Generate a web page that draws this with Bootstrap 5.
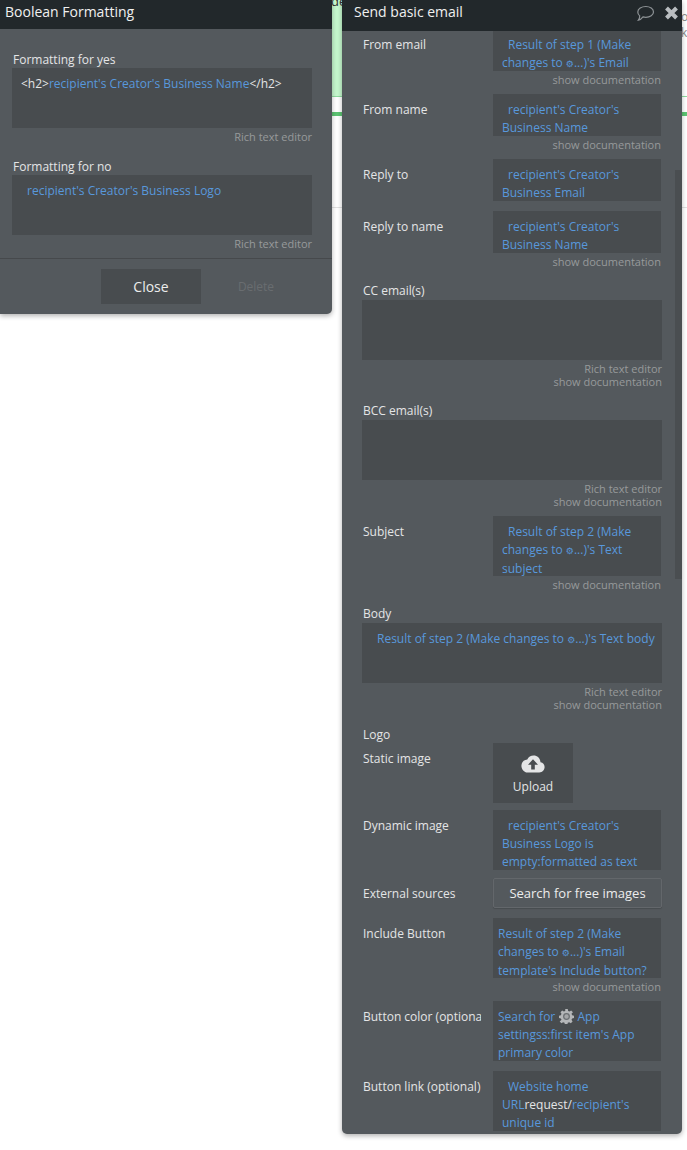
<!DOCTYPE html>
<html lang="en">
<head>
    <meta charset="UTF-8">
    <meta name="viewport" content="width=device-width, initial-scale=1.0">
    <title>Send basic email</title>
    <link href="https://cdn.jsdelivr.net/npm/bootstrap@5.3.3/dist/css/bootstrap.min.css" rel="stylesheet">
    <style>
        body {
            background-color: #fff;
            font-family: "Open Sans", sans-serif;
            font-size: 12px;
            line-height: 18px;
            color: #e4e5e6;
            overflow: hidden;
        }
        /* what shows behind the two palettes */
        .bg-strip { position: absolute; left: 332px; top: 0; width: 355px; height: 208px; overflow: hidden; }
        .bg-green { position: absolute; left: 0; top: 0; width: 10px; height: 96px; background-color: #c5f8cd; }
        .bg-word { position: absolute; left: -1px; top: -8px; font-size: 13px; color: #333; }
        .bg-thin { position: absolute; left: 0; right: 0; top: 96px; height: 1px; background-color: #8fdc9f; }
        .bg-thick { position: absolute; left: 0; right: 0; top: 112px; height: 4px; background-color: #5cc472; }
        .bg-edge { position: absolute; left: 0; right: 0; top: 207px; height: 1px; background-color: #e2e2e2; }
        .bg-side { position: absolute; left: 349px; font-size: 12px; color: #888; }

        .palette {
            position: absolute;
            top: 0;
            background-color: #54595d;
            box-shadow: 0 2px 5px rgba(0, 0, 0, .3);
            border-radius: 0 0 5px 5px;
        }
        .pal-left { left: 0; width: 332px; height: 314px; border-radius: 0 0 5px 0; }
        .pal-right { left: 342px; width: 340px; height: 1134px; }
        .pal-head {
            background-color: #22282b;
            color: #f0f0f0;
            font-size: 14px;
            height: 29px;
            line-height: 24px;
            padding-left: 5px;
        }
        .pal-right .pal-head { height: 31px; padding-left: 12px; }
        .pal-body { padding: 0 20px; position: relative; }
        .pal-left .pal-body { padding: 21px 20px 0 12px; }

        .lbl { padding: 1px 0 0 1px; margin-bottom: -1px; }
        .lbl-side { width: 131px; flex: none; padding: 7px 0 0 1px; white-space: nowrap; overflow: hidden; }
        .lbl-cut { width: 119px; margin-right: 12px; }
        .fld {
            background-color: #484c4f;
            color: #e4e5e6;
            padding: 7px 5px 0 9px;
            height: 60px;
            overflow: hidden;
        }
        .fld-side { width: 168px; }
        .fld-flat { padding-left: 5px; }
        .fld-two { height: 42px; }
        .fld-top { height: 40px; padding-top: 5px; }
        .fld-wide { padding-left: 15px; padding-right: 0; }
        .dyn { color: #5898dc; }
        .ind { display: inline-block; width: 6px; }
        .tiny-gear { font-family: "DejaVu Sans", sans-serif; font-size: 9px; }
        .doc { color: #97999b; font-size: 11px; text-align: right; padding-right: 1px; }
        .doc-rich { color: #97999b; font-size: 11px; line-height: 13px; text-align: right; padding-top: 2px; }
        .doc-rich span { display: block; }

        .sp5 { margin-top: 5px; }
        .sp7 { margin-top: 7px; }
        .sp8 { margin-top: 8px; }
        .sp10 { margin-top: 10px; }
        .sp13 { margin-top: 13px; }
        .sp14 { margin-top: 14px; }
        .sp1 { margin-top: 1px; }

        .upload-box {
            width: 80px;
            height: 60px;
            background-color: #484c4f;
            text-align: center;
            padding-top: 12px;
        }
        .upload-box svg { display: block; margin: 0 auto 5px; }
        .free-btn {
            width: 169px;
            height: 30px;
            background-color: #54595d;
            border: 1px solid #63676b;
            border-radius: 2px;
            color: #ececec;
            font-size: 13px;
            padding: 0;
            box-shadow: 0 1px 1px rgba(0, 0, 0, .15);
        }
        .rule { border-top: 1px solid #46494c; margin: 8px -20px 0 -12px; }
        .foot-row { padding-top: 10px; }
        .close-btn {
            width: 100px;
            height: 35px;
            background-color: #484c4f;
            color: #ececec;
            border: 0;
            border-radius: 0;
            font-size: 14px;
            padding: 0;
            margin-left: 89px;
        }
        .delete-btn {
            width: 100px;
            margin-left: 5px;
            color: #696d70;
            font-size: 12px;
            line-height: 35px;
            text-align: center;
        }
        .scroll-thumb {
            position: absolute;
            left: 333px;
            top: 139px;
            width: 7px;
            height: 409px;
            background-color: #4a4e51;
        }
        .head-icons { position: absolute; top: 5px; left: 294px; display: flex; gap: 9px; }
        .gear-inline { vertical-align: -3px; margin-left: 1px; }
    </style>
</head>
<body>
    <div class="bg-strip">
        <div class="bg-green"></div>
        <div class="bg-word">de</div>
        <div class="bg-thin"></div>
        <div class="bg-thick"></div>
        <div class="bg-edge"></div>
        <div class="bg-side" style="top: 8px">o</div>
        <div class="bg-side" style="top: 24px">k</div>
    </div>

    <div class="palette pal-left">
        <div class="pal-head">Boolean Formatting</div>
        <div class="pal-body">
            <div class="lbl">Formatting for yes</div>
            <div class="fld fld-flat">
                <span class="ind" style="width: 4px"></span>&lt;h2&gt;<span class="dyn">recipient's Creator's Business Name</span>&lt;/h2&gt;
            </div>
            <div class="doc-rich"><span>Rich text editor</span></div>
            <div class="lbl sp14">Formatting for no</div>
            <div class="fld fld-wide"><span class="dyn">recipient's Creator's Business Logo</span></div>
            <div class="doc-rich"><span>Rich text editor</span></div>
            <div class="rule"></div>
            <div class="d-flex foot-row">
                <button class="close-btn" type="button">Close</button>
                <div class="delete-btn">Delete</div>
            </div>
        </div>
    </div>

    <div class="palette pal-right">
        <div class="pal-head">Send basic email</div>
        <div class="head-icons">
            <svg width="19" height="17" viewBox="0 0 19 17" fill="none" stroke="#8d9295" stroke-width="1.2">
                <path d="M9.8 1.5c4.200 0 7.700 2.400 7.700 5.400s-3.500 5.400-7.700 5.400c-1 0-1.900-.1-2.800-.4-1 1.300-2.600 2.900-4.600 3.300.8-1.100 1.300-2.400 1.300-4.300C2.500 9.900 1.800 8.500 1.800 6.900c0-3 3.700-5.400 8-5.400z"/>
            </svg>
            <svg width="15" height="16" viewBox="0 0 15 16" fill="none" stroke="#b9bdc0" stroke-width="4">
                <path d="M2.500 3l10 10M12.500 3l-10 10"/>
            </svg>
        </div>
        <div class="pal-body">
            <div class="scroll-thumb"></div>

            <div class="d-flex">
                <div class="lbl-side" style="padding-top: 5px">From email</div>
                <div class="fld fld-side fld-top"><span class="ind"></span><span class="dyn">Result of step 1 (Make changes to <span class="tiny-gear">⚙</span>...)'s Email</span></div>
            </div>
            <div class="doc">show documentation</div>

            <div class="d-flex sp5">
                <div class="lbl-side">From name</div>
                <div class="fld fld-side fld-two"><span class="ind"></span><span class="dyn">recipient's Creator's Business Name</span></div>
            </div>
            <div class="doc">show documentation</div>

            <div class="d-flex sp5">
                <div class="lbl-side">Reply to</div>
                <div class="fld fld-side fld-two"><span class="ind"></span><span class="dyn">recipient's Creator's Business Email</span></div>
            </div>

            <div class="d-flex sp10">
                <div class="lbl-side">Reply to name</div>
                <div class="fld fld-side fld-two"><span class="ind"></span><span class="dyn">recipient's Creator's Business Name</span></div>
            </div>
            <div class="doc">show documentation</div>

            <div class="lbl sp10">CC email(s)</div>
            <div class="fld sp1"></div>
            <div class="doc-rich"><span>Rich text editor</span><span>show documentation</span></div>

            <div class="lbl sp13">BCC email(s)</div>
            <div class="fld sp1"></div>
            <div class="doc-rich"><span>Rich text editor</span><span>show documentation</span></div>

            <div class="d-flex sp8">
                <div class="lbl-side">Subject</div>
                <div class="fld fld-side"><span class="ind"></span><span class="dyn">Result of step 2 (Make changes to <span class="tiny-gear">⚙</span>...)'s Text subject</span></div>
            </div>
            <div class="doc">show documentation</div>

            <div class="lbl sp10">Body</div>
            <div class="fld fld-wide sp1"><span class="dyn">Result of step 2 (Make changes to <span class="tiny-gear">⚙</span>...)'s Text body</span></div>
            <div class="doc-rich"><span>Rich text editor</span><span>show documentation</span></div>

            <div class="lbl sp14">Logo</div>
            <div class="d-flex">
                <div class="lbl-side">Static image</div>
                <div class="upload-box">
                    <svg width="24" height="18" viewBox="0 0 24 18">
                        <path fill="#e4e5e6" d="M19.500 7.200C19.200 3.200 16.200.5 12.600.5 9.800.5 7.400 2.100 6.300 4.500 3 4.700.4 7.300.4 10.700c0 3.500 2.800 6.800 6.100 6.800h11.800c3.100 0 5.300-2.800 5.300-5.500 0-2.500-1.700-4.500-4.100-4.800z"/>
                        <path fill="#484c4f" d="M12 4.300l5 5.400h-3.200v4.800h-3.600V9.700H7z"/>
                    </svg>
                    Upload
                </div>
            </div>

            <div class="d-flex sp7">
                <div class="lbl-side">Dynamic image</div>
                <div class="fld fld-side"><span class="ind"></span><span class="dyn">recipient's Creator's Business Logo is empty:formatted as text</span></div>
            </div>

            <div class="d-flex sp8">
                <div class="lbl-side" style="padding-top: 7px">External sources</div>
                <button class="free-btn" type="button">Search for free images</button>
            </div>

            <div class="d-flex sp10">
                <div class="lbl-side">Include Button</div>
                <div class="fld fld-side fld-flat"><span class="dyn">Result of step 2 (Make changes to <span class="tiny-gear">⚙</span>...)'s Email template's Include button?</span></div>
            </div>
            <div class="doc">show documentation</div>

            <div class="d-flex sp5">
                <div class="lbl-side lbl-cut">Button color (optional)</div>
                <div class="fld fld-side fld-flat"><span class="dyn">Search for
                    <svg class="gear-inline" width="15" height="15" viewBox="0 0 24 24">
                        <path fill="#b4b6b8" d="M10 0h4l.6 3 2.300 1 2.600-1.700 2.800 2.800L20 7.700l1 2.300 3 .6v3.800l-3 .6-1 2.300 1.700 2.600-2.800 2.800-2.600-1.700-2.300 1-.6 3h-4l-.6-3-2.300-1-2.600 1.700-2.800-2.800L4 17.300 3 15l-3-.6v-3.800l3-.6 1-2.300-1.700-2.600 2.800-2.800L7.700 4l2.300-1z"/>
                        <circle cx="12" cy="12" r="5.500" fill="#6b6f72"/>
                        <circle cx="12" cy="12" r="3.500" fill="#a4a6a8"/>
                    </svg>
                    App settingss:first item's App primary color</span></div>
            </div>

            <div class="d-flex sp10">
                <div class="lbl-side">Button link (optional)</div>
                <div class="fld fld-side"><span class="ind"></span><span class="dyn">Website home URL</span>request/<span class="dyn">recipient's unique id</span></div>
            </div>
        </div>
    </div>

    <script src="https://cdn.jsdelivr.net/npm/bootstrap@5.3.3/dist/js/bootstrap.bundle.min.js"></script>
</body>
</html>
